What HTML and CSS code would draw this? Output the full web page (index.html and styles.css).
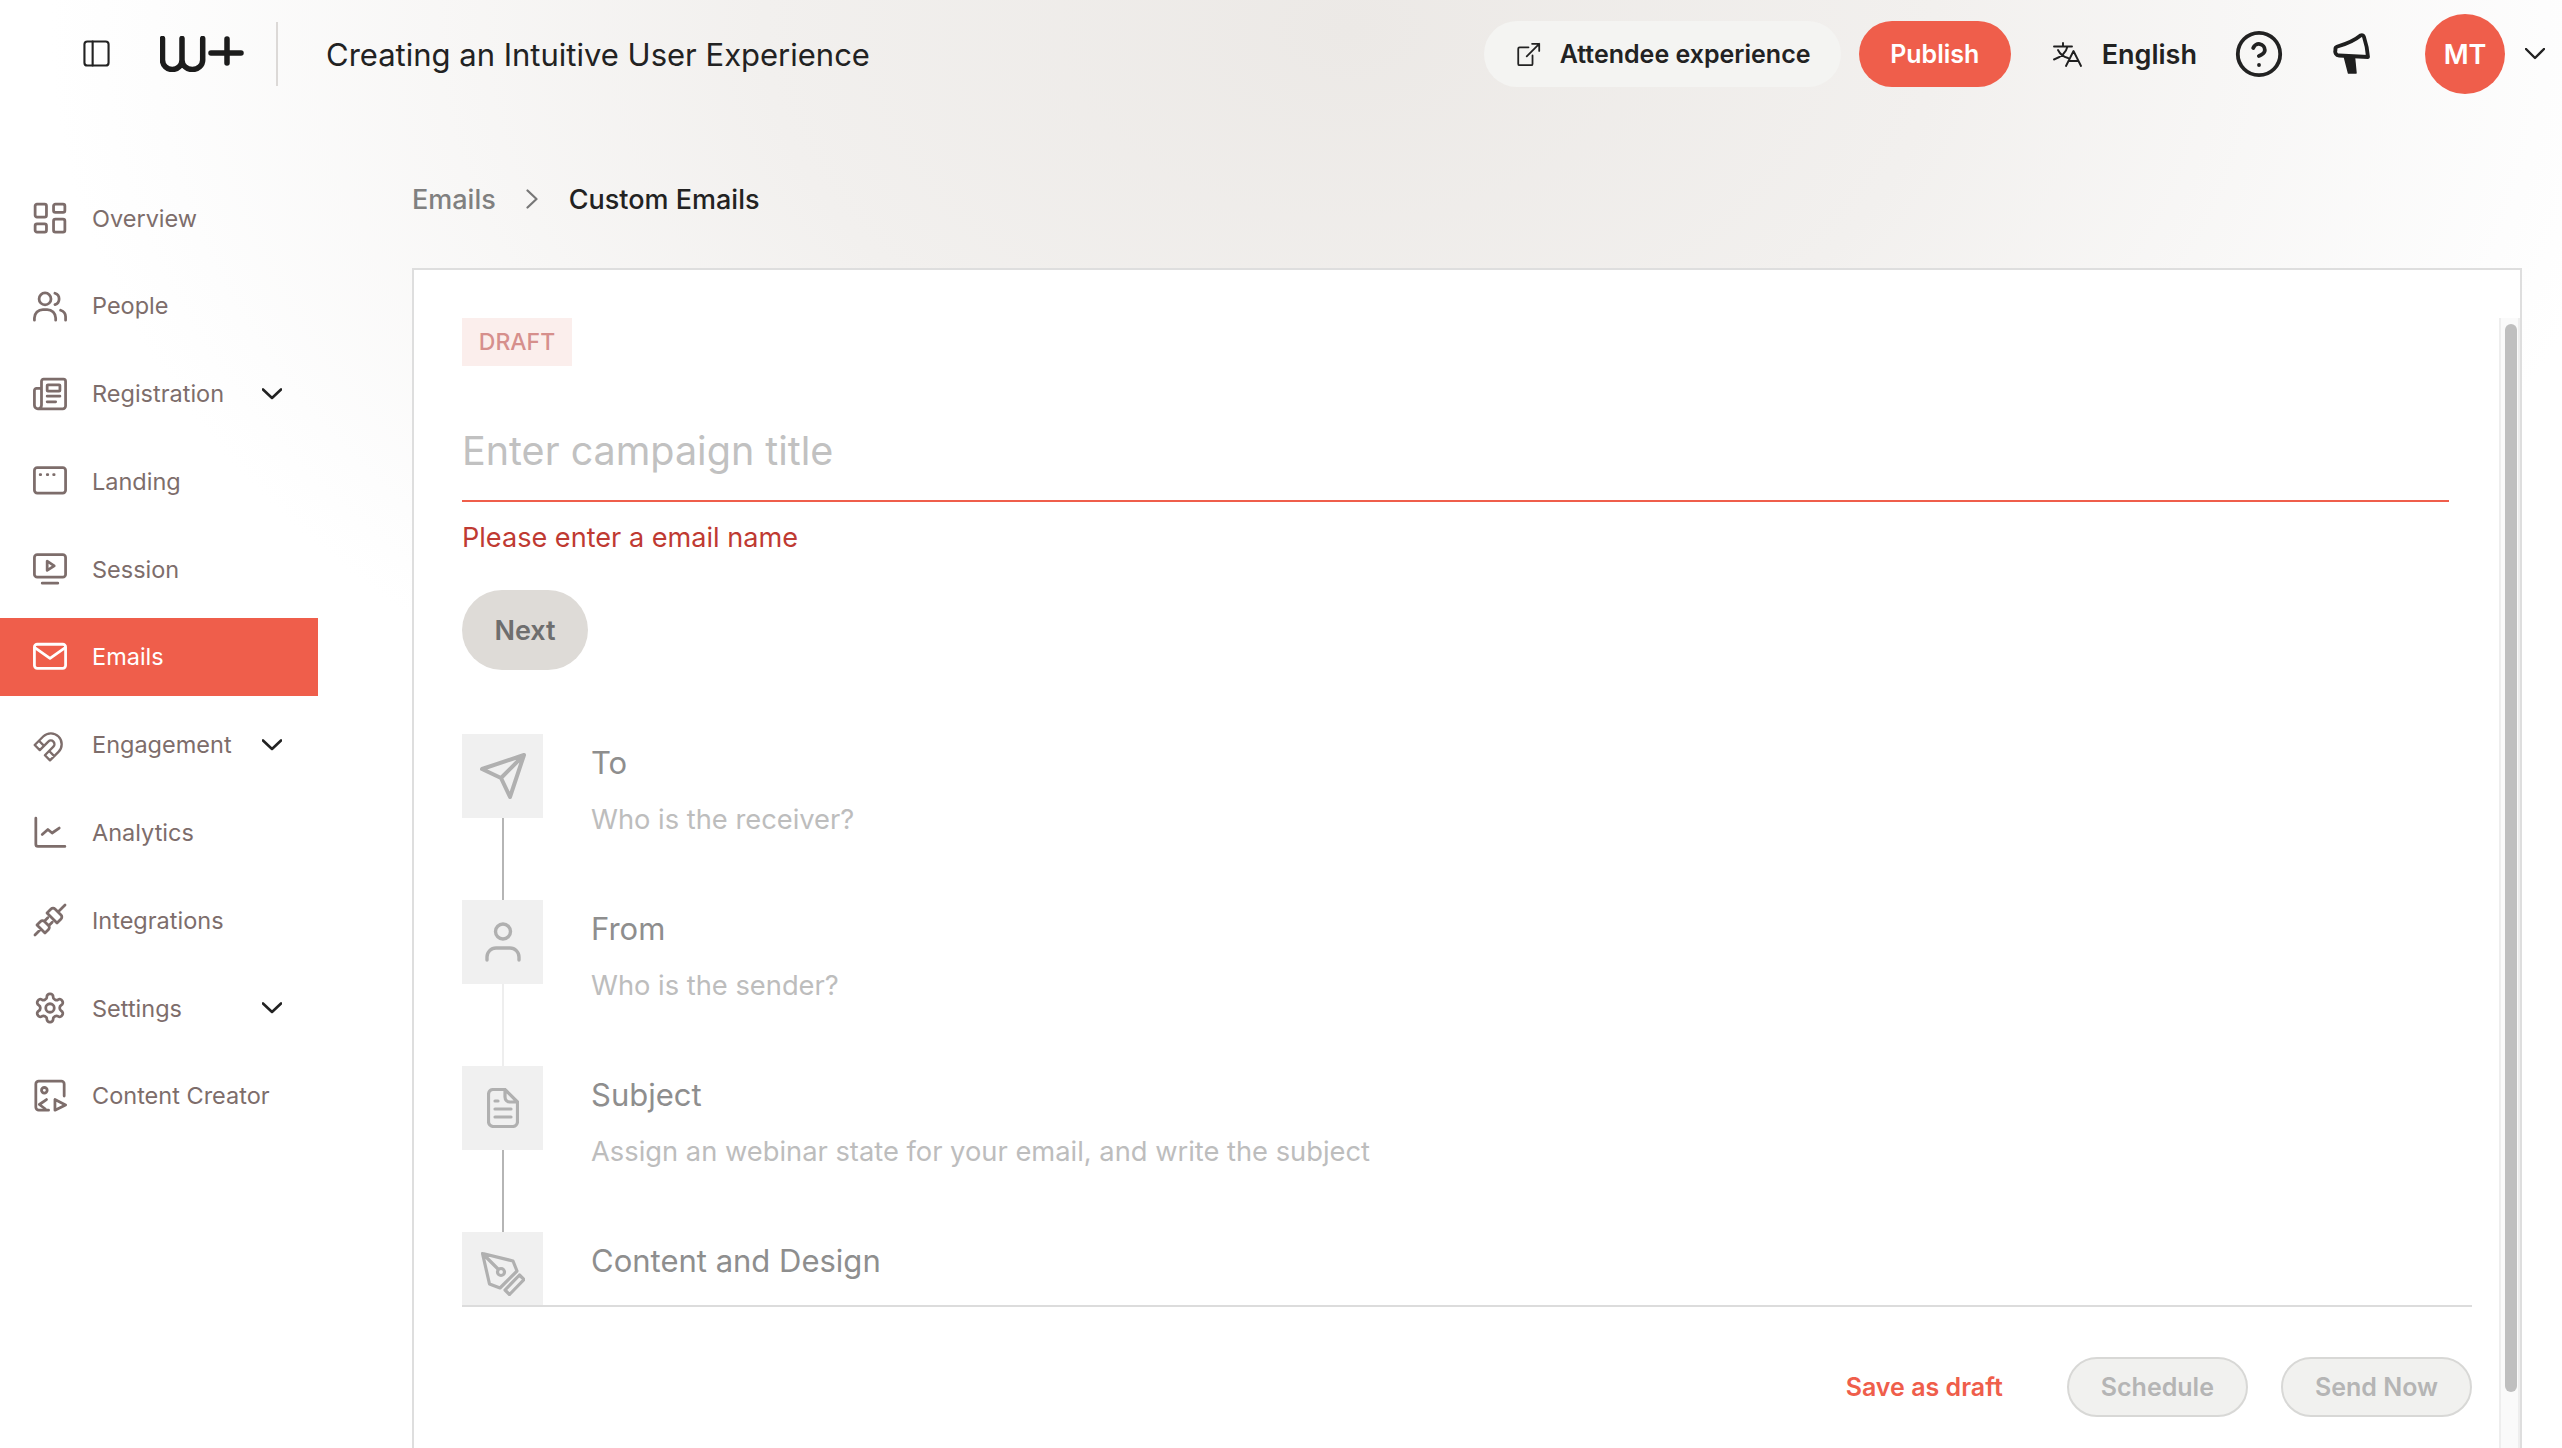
FILE: index.html
```html
<!DOCTYPE html>
<html lang="en">
<head>
    <meta charset="UTF-8">
    <meta name="viewport" content="width=device-width, initial-scale=1.0">
    <title>Custom Emails</title>
    <link rel="stylesheet" href="styles.css">
</head>
<body>
    <header class="topbar">
        <div class="topbar-left">
            <svg class="toggle-icon" viewBox="0 0 28 28"><rect x="1.5" y="1.5" width="25" height="25" rx="3"/><path d="M10 1.5v25"/></svg>
            <svg class="logo" viewBox="0 0 84 36"><path d="M2.500 2.500V24a9.750 9.500 0 0 0 19.500 0V2.500M22 24a10.350 9.500 0 0 0 20.700 0V2.500M51 17h30M67 3v24"/></svg>
            <div class="topbar-divider"></div>
            <div class="event-title">Creating an Intuitive User Experience</div>
        </div>
        <div class="topbar-right">
            <a class="attendee-btn">
                <svg class="external-icon" viewBox="0 0 28 28"><path d="M14 6H4a1.500 1.500 0 0 0-1.500 1.500v17A1.500 1.500 0 0 0 4 26h13a1.500 1.500 0 0 0 1.500-1.500V15M12 16 26 2M18 2h8v8"/></svg>
                Attendee experience
            </a>
            <a class="publish-btn">Publish</a>
            <div class="lang">
                <svg class="lang-icon" viewBox="0 0 29 25"><path d="M10 1v3.500M1 4.500h18M14.500 4.500C13 11 8 15 1 17.500M5 8c2 4 6 7 10 8M13 24l7.500-15L28 24M15.500 19h10"/></svg>
                English
            </div>
            <svg class="help-icon" viewBox="0 0 24 24"><circle cx="12" cy="12" r="10.600"/><path d="M9.090 9a3 3 0 0 1 5.830 1c0 2-3 3-3 3M12 17.500h.01"/></svg>
            <svg class="megaphone-icon" viewBox="0 0 38 42"><path d="M2.500 17a3 3 0 0 1 2-3.500C13 11 21 8 27.500 2.500c2-1 3 0 3.500 1.500C33 10 34.500 17 35 24L6 22.500A4 4 0 0 1 2.500 17z"/><path class="megaphone-handle" d="M11.500 24.500H21.500L23 40H15.500z"/></svg>
            <div class="avatar">MT</div>
            <svg class="avatar-chevron" viewBox="0 0 20 12"><path d="m1 1 9 9 9-9"/></svg>
        </div>
    </header>

    <div class="layout">
        <nav class="sidebar">
            <a class="nav-item">
                <svg viewBox="0 0 24 24"><rect x="1.500" y="2.200" width="8" height="9.200" rx="1.300"/><rect x="14.500" y="2.200" width="8" height="5.800" rx="1.300"/><rect x="1.500" y="16.200" width="8" height="5.800" rx="1.300"/><rect x="14.500" y="12.800" width="8" height="9.200" rx="1.300"/></svg>
                <span class="nav-label">Overview</span>
            </a>
            <a class="nav-item">
                <svg viewBox="0 0 24 24"><circle cx="8.500" cy="7" r="4.200"/><path d="M1 22v-1.500a6 6 0 0 1 6-6h3a6 6 0 0 1 6 6V22M15.500 3a4.200 4.200 0 0 1 0 8M19.500 15a5 5 0 0 1 3.500 5v2"/></svg>
                <span class="nav-label">People</span>
            </a>
            <a class="nav-item">
                <svg viewBox="0 0 24 24"><path d="M3.500 22.500H21a2 2 0 0 0 2-2V3a1.500 1.500 0 0 0-1.500-1.500H7.500A1.500 1.500 0 0 0 6 3v17a2.500 2.500 0 0 1-5 0V9.500a1.500 1.500 0 0 1 1.500-1.500H6"/><rect x="10" y="5.500" width="9" height="4.500" rx=".5"/><path d="M10 13.500h9M10 17.500h6"/></svg>
                <span class="nav-label">Registration</span>
                <svg class="nav-chevron" viewBox="0 0 20 12"><path d="m1 1.500 9 8.500 9-8.500"/></svg>
            </a>
            <a class="nav-item">
                <svg viewBox="0 0 24 24"><rect x="1" y="2.500" width="22" height="18" rx="2"/><path class="dots" d="M5 7.500h.5M10 7.500h.5M14.500 7.500h.5"/></svg>
                <span class="nav-label">Landing</span>
            </a>
            <a class="nav-item">
                <svg viewBox="0 0 24 24"><rect x="1" y="1.800" width="22" height="16" rx="2"/><path d="M10 6.500v6.500l5-3.200zM6.500 22h11"/></svg>
                <span class="nav-label">Session</span>
            </a>
            <a class="nav-item nav-active">
                <svg viewBox="0 0 24 24"><rect x="1" y="3" width="22" height="17" rx="2"/><path d="m1.500 5.500 10.500 7.500 10.500-7.500"/></svg>
                <span class="nav-label">Emails</span>
            </a>
            <a class="nav-item">
                <svg viewBox="0 0 24 24"><g transform="rotate(45 12 12) translate(1.800 1.800) scale(.85)"><path d="M3 21V11a9 9 0 0 1 18 0v10h-6V11a3 3 0 0 0-6 0v10zM3 16h6M15 16h6"/></g></svg>
                <span class="nav-label">Engagement</span>
                <svg class="nav-chevron" viewBox="0 0 20 12"><path d="m1 1.500 9 8.500 9-8.500"/></svg>
            </a>
            <a class="nav-item">
                <svg viewBox="0 0 24 24"><path d="M2 1.500V20a1.500 1.500 0 0 0 1.500 1.500h19M6.500 13l4-3.500 3 2.500 5-3.500"/></svg>
                <span class="nav-label">Analytics</span>
            </a>
            <a class="nav-item">
                <svg viewBox="0 0 24 24"><g transform="rotate(-45 12 12)"><path d="M-3 12h6M3 8h3.500a2 2 0 0 1 2 2v4a2 2 0 0 1-2 2H3zM8.500 9.800H12M8.500 14.200H12M14 7h4a2 2 0 0 1 2 2v6a2 2 0 0 1-2 2h-4zM20 12h7"/></g></svg>
                <span class="nav-label">Integrations</span>
            </a>
            <a class="nav-item">
                <svg viewBox="0 0 24 24"><path d="M12.220 2h-.44a2 2 0 0 0-2 2v.18a2 2 0 0 1-1 1.730l-.43.25a2 2 0 0 1-2 0l-.15-.08a2 2 0 0 0-2.730.73l-.22.38a2 2 0 0 0 .73 2.730l.15.1a2 2 0 0 1 1 1.720v.51a2 2 0 0 1-1 1.740l-.15.09a2 2 0 0 0-.73 2.730l.22.38a2 2 0 0 0 2.730.73l.15-.08a2 2 0 0 1 2 0l.43.25a2 2 0 0 1 1 1.730V20a2 2 0 0 0 2 2h.44a2 2 0 0 0 2-2v-.18a2 2 0 0 1 1-1.730l.43-.25a2 2 0 0 1 2 0l.15.08a2 2 0 0 0 2.730-.73l.22-.39a2 2 0 0 0-.73-2.730l-.15-.08a2 2 0 0 1-1-1.740v-.5a2 2 0 0 1 1-1.740l.15-.09a2 2 0 0 0 .73-2.730l-.22-.38a2 2 0 0 0-2.730-.73l-.15.08a2 2 0 0 1-2 0l-.43-.25a2 2 0 0 1-1-1.730V4a2 2 0 0 0-2-2z"/><circle cx="12" cy="12" r="3"/></svg>
                <span class="nav-label">Settings</span>
                <svg class="nav-chevron" viewBox="0 0 20 12"><path d="m1 1.500 9 8.500 9-8.500"/></svg>
            </a>
            <a class="nav-item">
                <svg viewBox="0 0 24 24"><path d="M11 22H4a2 2 0 0 1-2-2V3.500a2 2 0 0 1 2-2h16a2 2 0 0 1 2 2V12"/><circle cx="8" cy="8" r="2"/><path d="m9.500 14.500-5 3.500 4 3M15.500 14.500v7.500l7.500-3.700z"/></svg>
                <span class="nav-label">Content Creator</span>
            </a>
        </nav>

        <main class="content">
            <div class="breadcrumb">
                <span class="crumb">Emails</span>
                <svg class="crumb-sep" viewBox="0 0 12 20"><path d="m1.500 1.500 9 8.500-9 8.500"/></svg>
                <span class="crumb-current">Custom Emails</span>
            </div>

            <section class="card">
                <div class="card-scrollbar"><div class="card-thumb"></div></div>
                <div class="badge-draft">DRAFT</div>
                <div class="campaign-title">Enter campaign title</div>
                <div class="campaign-error">Please enter a email name</div>
                <button class="next-btn">Next</button>

                <div class="steps">
                    <div class="step">
                        <div class="step-rail">
                            <div class="step-icon"><svg class="icon-send" viewBox="0 0 24 24"><path d="M22.500 1.500 11 13M22.500 1.500l-7 21-4.500-9.500-9.500-4.500z"/></svg></div>
                            <div class="step-line"></div>
                        </div>
                        <div class="step-text">
                            <div class="step-title">To</div>
                            <div class="step-sub">Who is the receiver?</div>
                        </div>
                    </div>
                    <div class="step">
                        <div class="step-rail">
                            <div class="step-icon"><svg class="icon-user" viewBox="0 0 36 40"><circle cx="18" cy="9.500" r="7.500"/><path d="M2 38v-3a9 9 0 0 1 9-9h14a9 9 0 0 1 9 9v3"/></svg></div>
                            <div class="step-line step-line-light"></div>
                        </div>
                        <div class="step-text">
                            <div class="step-title">From</div>
                            <div class="step-sub">Who is the sender?</div>
                        </div>
                    </div>
                    <div class="step">
                        <div class="step-rail">
                            <div class="step-icon"><svg class="icon-file" viewBox="0 0 32 40"><path d="M6 1.500h12l12.500 12.500v19.500a5 5 0 0 1-5 5H6a5 5 0 0 1-4.500-5V6A5 5 0 0 1 6 1.500zM18 1.500V9a5 5 0 0 0 5 5h7.500M8 13h3M8 21h16M8 29h16"/></svg></div>
                            <div class="step-line"></div>
                        </div>
                        <div class="step-text">
                            <div class="step-title">Subject</div>
                            <div class="step-sub">Assign an webinar state for your email, and write the subject</div>
                        </div>
                    </div>
                    <div class="step">
                        <div class="step-rail">
                            <div class="step-icon step-icon-last"><svg class="icon-pen" viewBox="0 0 44 44"><path d="M1.500 1.500 32 9l4 10-17 17-10.500-4zM1.500 1.500 17 17M24 38l4.500 4.500L43 27.500 38.500 23z"/><circle cx="20" cy="20" r="3.500"/></svg></div>
                        </div>
                        <div class="step-text">
                            <div class="step-title">Content and Design</div>
                        </div>
                    </div>
                </div>

                <div class="card-actions">
                    <a class="save-draft">Save as draft</a>
                    <button class="ghost-btn">Schedule</button>
                    <button class="ghost-btn">Send Now</button>
                </div>
            </section>
        </main>
    </div>
</body>
</html>
```

FILE: styles.css
```css
* {
    box-sizing: border-box;
}

body {
    font-family: 'Inter', 'Liberation Sans', sans-serif;
    margin: 0;
    height: 1448px;
    overflow: hidden;
    color: #222;
    background: #fff radial-gradient(ellipse 1300px 850px at 1350px 30px, #ece9e6 0%, #f2f0ee 45%, #fdfdfd 92%, #fff 100%);
}

svg {
    display: block;
    fill: none;
    stroke: currentColor;
    stroke-linecap: round;
    stroke-linejoin: round;
}

/* top bar */
.topbar {
    height: 108px;
    display: flex;
    align-items: center;
    justify-content: space-between;
}

.topbar-left {
    display: flex;
    align-items: center;
    padding-left: 83px;
}

.toggle-icon {
    width: 27px;
    height: 27px;
    stroke-width: 2.200;
    margin-top: -2px;
}

.logo {
    width: 84px;
    height: 36px;
    margin-left: 50px;
    stroke: #1c1c1c;
    stroke-width: 5.500;
}

.topbar-divider {
    width: 2px;
    height: 64px;
    background: #dcd9d7;
    margin-left: 32px;
}

.event-title {
    font-size: 31px;
    margin-left: 48px;
    color: #222;
}

.topbar-right {
    display: flex;
    align-items: center;
    padding-right: 17px;
}

.attendee-btn {
    display: flex;
    align-items: center;
    gap: 19px;
    height: 66px;
    width: 357px;
    padding-left: 32px;
    border-radius: 33px;
    background: #f4f4f2;
    font-size: 25px;
    font-weight: 600;
}

.external-icon {
    width: 25px;
    height: 25px;
    stroke-width: 2;
}

.publish-btn {
    display: flex;
    align-items: center;
    justify-content: center;
    width: 152px;
    height: 66px;
    margin-left: 18px;
    border-radius: 33px;
    background: #ef5e4b;
    color: #fff;
    font-size: 25px;
    font-weight: 600;
}

.lang {
    display: flex;
    align-items: center;
    gap: 20px;
    margin-left: 42px;
    font-size: 27px;
    font-weight: 600;
}

.lang-icon {
    width: 29px;
    height: 25px;
    stroke: #1f1f1f;
    stroke-width: 1.900;
}

.help-icon {
    width: 48px;
    height: 48px;
    margin-left: 38px;
    stroke-width: 1.900;
}

.megaphone-icon {
    width: 38px;
    height: 42px;
    margin-left: 50px;
    stroke: #1f1f1f;
    stroke-width: 3.800;
}

.megaphone-handle {
    fill: #1f1f1f;
    stroke-width: 1.500;
}

.avatar {
    display: flex;
    align-items: center;
    justify-content: center;
    width: 80px;
    height: 80px;
    margin-left: 54px;
    border-radius: 50%;
    background: #ef5e4b;
    color: #fff;
    font-size: 27px;
    font-weight: 600;
}

.avatar-chevron {
    width: 20px;
    height: 12px;
    margin-left: 20px;
    stroke-width: 2.400;
}

/* sidebar and main area */
.layout {
    display: flex;
}

.sidebar {
    width: 318px;
    flex-shrink: 0;
    padding-top: 71px;
    display: flex;
    flex-direction: column;
    gap: 9.800px;
}

.nav-item {
    display: flex;
    align-items: center;
    gap: 25px;
    height: 78px;
    padding: 0 36px 0 33px;
    color: #7d6d6b;
    font-size: 23.500px;
}

.nav-item > svg:first-child {
    width: 34px;
    height: 34px;
    flex-shrink: 0;
    stroke-width: 1.950;
}

.nav-item .dots {
    stroke-width: 1.800;
}

.nav-label {
    flex: 1;
}

.nav-chevron {
    width: 20px;
    height: 12px;
    color: #222;
    stroke-width: 2.600;
}

.nav-active {
    background: #ef5e4b;
    color: #fff;
}

.content {
    flex: 1;
    margin-left: 94px;
    margin-right: 40px;
    padding-top: 71px;
}

.breadcrumb {
    display: flex;
    align-items: center;
    height: 40px;
    margin-bottom: 49px;
    font-size: 27px;
    font-weight: 500;
}

.crumb {
    color: #808080;
}

.crumb-sep {
    width: 12px;
    height: 20px;
    margin: 0 31px 0 30px;
    color: #777;
    stroke-width: 2.200;
}

.crumb-current {
    color: #222;
}

/* email card, runs off the bottom of the window */
.card {
    position: relative;
    height: 1200px;
    padding: 48px 48px 0;
    background: #fff;
    border: 2px solid #dedede;
}

.card-scrollbar {
    position: absolute;
    top: 48px;
    right: 0;
    bottom: 0;
    width: 21px;
    background: #fafafa;
    border: solid #eeeeee;
    border-width: 0 2px;
    padding: 6px 4px 0;
}

.card-thumb {
    width: 12px;
    height: 1068px;
    border-radius: 6px;
    background: #bfbfbf;
}

.badge-draft {
    display: flex;
    align-items: center;
    justify-content: center;
    width: 110px;
    height: 48px;
    background: #fbeeec;
    color: #d68f8c;
    font-size: 23px;
    font-weight: 500;
}

.campaign-title {
    height: 136px;
    margin: 0 23px 0 0;
    padding-top: 60px;
    line-height: 50px;
    border-bottom: 2px solid #ef5e4b;
    color: #c1c1c1;
    font-size: 39.500px;
    font-weight: 400;
}

.campaign-error {
    margin-top: 18px;
    line-height: 36px;
    color: #bf3a32;
    font-size: 27.100px;
}

.next-btn {
    display: block;
    width: 126px;
    height: 80px;
    margin-top: 34px;
    border: none;
    border-radius: 40px;
    background: #dedbd7;
    color: #6e6e6e;
    font-family: inherit;
    font-size: 27px;
    font-weight: 600;
}

.steps {
    height: 573px;
    margin-top: 64px;
    overflow: hidden;
    border-bottom: 2px solid #dcdcdc;
}

.step {
    display: flex;
    height: 166px;
}

.step-rail {
    width: 81px;
    flex-shrink: 0;
    display: flex;
    flex-direction: column;
    align-items: center;
}

.step-icon {
    width: 81px;
    height: 84px;
    flex-shrink: 0;
    display: flex;
    align-items: center;
    justify-content: center;
    background: #f0f0f0;
    color: #b0b0b0;
}

.step-icon-last {
    align-items: flex-start;
    padding-top: 20px;
}

.step-line {
    width: 2px;
    height: 82px;
    background: #b5b5b5;
}

.step-line-light {
    background: #eeeeee;
}

.icon-send {
    width: 48px;
    height: 48px;
    stroke-width: 2;
}

.icon-user {
    width: 36px;
    height: 40px;
    stroke-width: 3.400;
}

.icon-file {
    width: 32px;
    height: 40px;
    stroke-width: 3.200;
}

.icon-pen {
    width: 44px;
    height: 44px;
    stroke-width: 3.200;
}

.step-text {
    margin-left: 48px;
    padding-top: 10px;
}

.step-title {
    line-height: 38px;
    color: #8e8e8e;
    font-size: 31px;
}

.step-sub {
    margin-top: 19px;
    line-height: 38px;
    color: #bdbdbd;
    font-size: 27.300px;
}

.card-actions {
    display: flex;
    align-items: center;
    justify-content: flex-end;
    margin-top: 50px;
}

.save-draft {
    color: #ef5e4b;
    font-size: 25px;
    font-weight: 600;
    margin-right: 64px;
}

.ghost-btn {
    height: 60px;
    padding: 0 32px;
    margin-left: 33px;
    border: 2px solid #d8d8d6;
    border-radius: 30px;
    background: #f1f1ef;
    color: #b5b5b5;
    font-family: inherit;
    font-size: 25px;
    font-weight: 600;
}

.save-draft + .ghost-btn {
    margin-left: 0;
}
```
